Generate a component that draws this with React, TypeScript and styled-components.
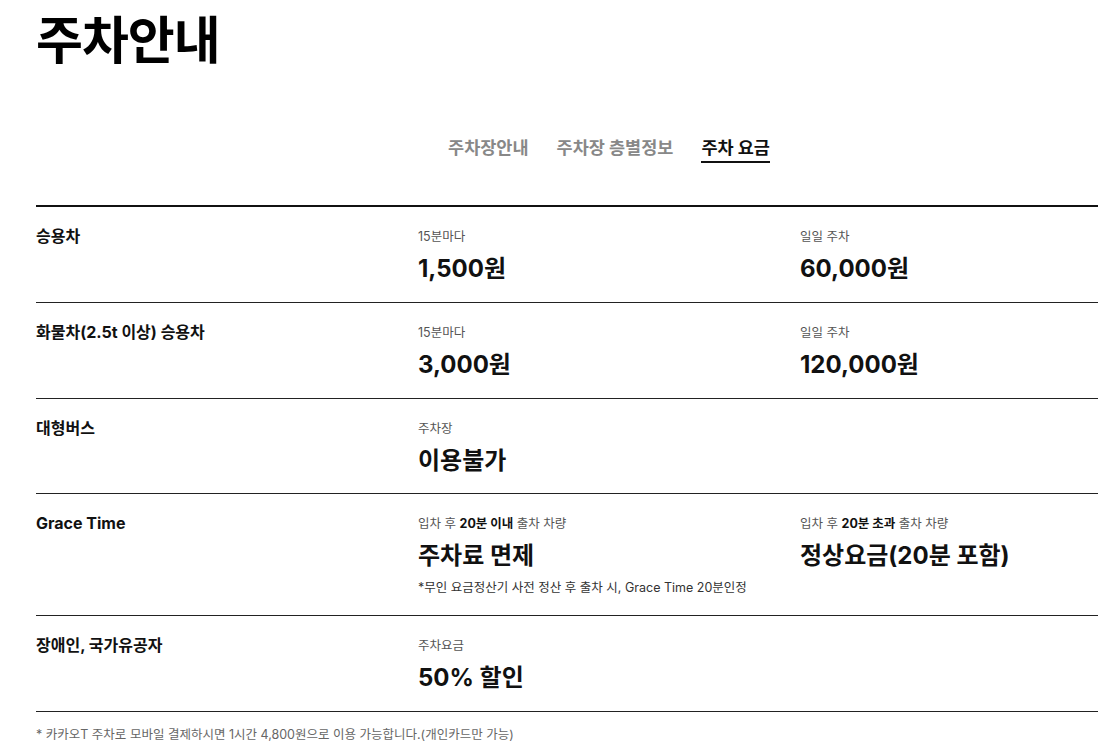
import styled, { createGlobalStyle } from 'styled-components'

const GlobalStyle = createGlobalStyle`
  body {
    margin: 0;
    overflow: hidden;
    background: #fff;
    font-family: Inter, "Noto Sans CJK KR", sans-serif;
    color: #111;
  }
`

const Page = styled.div`
  width: 1146px;
  padding: 10px 0 0 36px;
`

const Title = styled.h1`
  margin: 0;
  font-size: 51px;
  line-height: 62px;
  font-weight: 700;
  letter-spacing: -1px;
  color: #000;
`

const Tabs = styled.nav`
  display: flex;
  justify-content: center;
  gap: 28px;
  margin: 64px 0 42px;
`

const Tab = styled.a<{ $active?: boolean }>`
  font-size: 17.5px;
  line-height: 24px;
  font-weight: 700;
  color: ${p => (p.$active ? '#111' : '#888')};
  padding-bottom: 1px;
  border-bottom: 2px solid ${p => (p.$active ? '#111' : 'transparent')};
  cursor: pointer;
`

const Table = styled.div`
  border-top: 2px solid #111;
`

const Row = styled.div`
  display: grid;
  grid-template-columns: 382px 382px 382px;
  padding: 21px 0 17.8px;
  border-bottom: 1px solid #222;
`

const RowLabel = styled.div`
  font-size: 16px;
  line-height: 20px;
  font-weight: 700;
  margin-top: -2px;
`

const Cell = styled.div`
  display: flex;
  flex-direction: column;
`

const Caption = styled.span`
  font-size: 12.5px;
  line-height: 18px;
  color: #555;

  b {
    color: #111;
    font-weight: 700;
  }
`

const Price = styled.strong`
  margin-top: 8px;
  font-size: 24px;
  line-height: 30px;
  font-weight: 700;
  color: #111;
`

const Note = styled.span`
  margin-top: 8px;
  font-size: 12.5px;
  line-height: 18px;
  color: #333;
`

const Footnote = styled.p`
  margin: 14px 0 0;
  font-size: 12.5px;
  line-height: 18px;
  color: #666;
`

type Fee = {
  caption: React.ReactNode
  price: string
  note?: string
}

type FeeRow = {
  label: string
  fees: Fee[]
}

const rows: FeeRow[] = [
  {
    label: '승용차',
    fees: [
      { caption: '15분마다', price: '1,500원' },
      { caption: '일일 주차', price: '60,000원' },
    ],
  },
  {
    label: '화물차(2.5t 이상) 승용차',
    fees: [
      { caption: '15분마다', price: '3,000원' },
      { caption: '일일 주차', price: '120,000원' },
    ],
  },
  {
    label: '대형버스',
    fees: [{ caption: '주차장', price: '이용불가' }],
  },
  {
    label: 'Grace Time',
    fees: [
      {
        caption: (
          <>
            입차 후 <b>20분 이내</b> 출차 차량
          </>
        ),
        price: '주차료 면제',
        note: '*무인 요금정산기 사전 정산 후 출차 시, Grace Time 20분인정',
      },
      {
        caption: (
          <>
            입차 후 <b>20분 초과</b> 출차 차량
          </>
        ),
        price: '정상요금(20분 포함)',
      },
    ],
  },
  {
    label: '장애인, 국가유공자',
    fees: [{ caption: '주차요금', price: '50% 할인' }],
  },
]

const App = () => {
  return (
    <>
      <GlobalStyle />
      <Page>
        <Title>주차안내</Title>
        <Tabs>
          <Tab>주차장안내</Tab>
          <Tab>주차장 층별정보</Tab>
          <Tab $active>주차 요금</Tab>
        </Tabs>
        <Table>
          {rows.map(row => (
            <Row key={row.label}>
              <RowLabel>{row.label}</RowLabel>
              {row.fees.map((fee, i) => (
                <Cell key={i}>
                  <Caption>{fee.caption}</Caption>
                  <Price>{fee.price}</Price>
                  {fee.note && <Note>{fee.note}</Note>}
                </Cell>
              ))}
            </Row>
          ))}
        </Table>
        <Footnote>* 카카오T 주차로 모바일 결제하시면 1시간 4,800원으로 이용 가능합니다.(개인카드만 가능)</Footnote>
      </Page>
    </>
  )
}

export default App
